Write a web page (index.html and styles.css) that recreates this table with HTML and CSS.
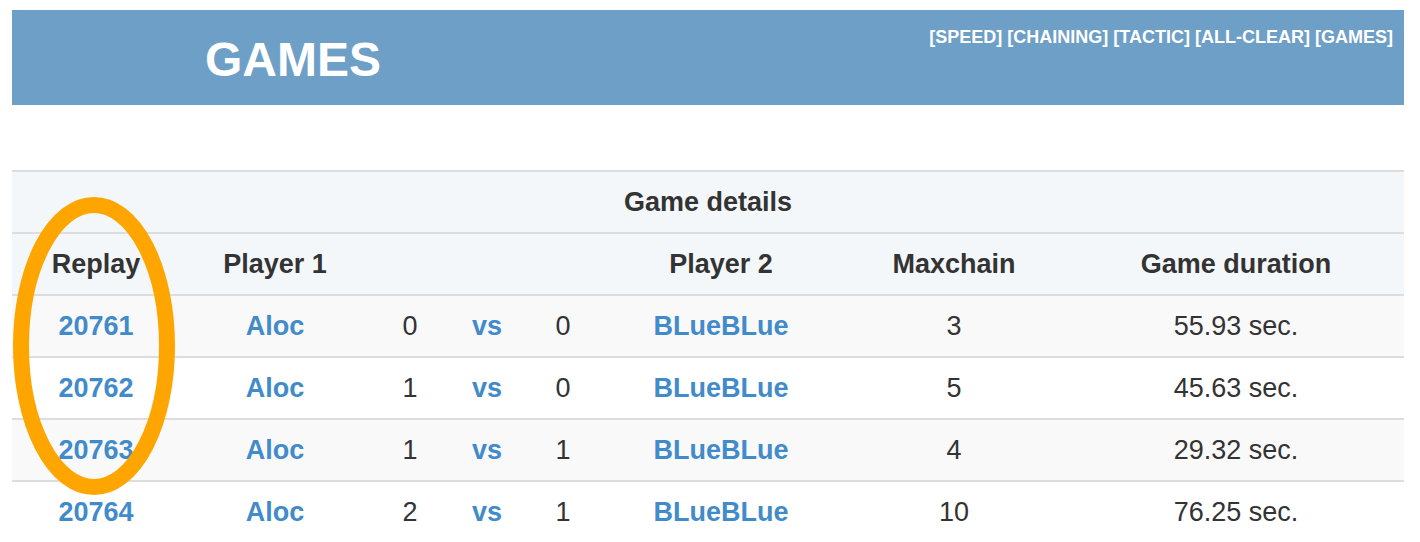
FILE: index.html
```html
<!DOCTYPE html>
<html>
<head>
<meta charset="utf-8">
<title>Games</title>
<link rel="stylesheet" href="styles.css">
</head>
<body>
<div class="page">
  <header class="banner">
    <h1 class="title">GAMES</h1>
    <nav class="nav">
      <a href="#">[SPEED]</a> <a href="#">[CHAINING]</a> <a href="#">[TACTIC]</a> <a href="#">[ALL-CLEAR]</a> <a href="#">[GAMES]</a>
    </nav>
  </header>

  <div class="table-wrap">
    <table class="games">
      <colgroup>
        <col class="c-replay">
        <col class="c-p1">
        <col class="c-s1">
        <col class="c-vs">
        <col class="c-s2">
        <col class="c-p2">
        <col class="c-max">
        <col class="c-dur">
      </colgroup>
      <thead>
        <tr><th colspan="8">Game details</th></tr>
        <tr>
          <th>Replay</th>
          <th>Player 1</th>
          <th></th>
          <th></th>
          <th></th>
          <th>Player 2</th>
          <th>Maxchain</th>
          <th>Game duration</th>
        </tr>
      </thead>
      <tbody>
        <tr class="odd">
          <td><a href="#">20761</a></td><td><a href="#">Aloc</a></td><td>0</td><td><a href="#">vs</a></td><td>0</td><td><a href="#">BLueBLue</a></td><td>3</td><td>55.93 sec.</td>
        </tr>
        <tr>
          <td><a href="#">20762</a></td><td><a href="#">Aloc</a></td><td>1</td><td><a href="#">vs</a></td><td>0</td><td><a href="#">BLueBLue</a></td><td>5</td><td>45.63 sec.</td>
        </tr>
        <tr class="odd">
          <td><a href="#">20763</a></td><td><a href="#">Aloc</a></td><td>1</td><td><a href="#">vs</a></td><td>1</td><td><a href="#">BLueBLue</a></td><td>4</td><td>29.32 sec.</td>
        </tr>
        <tr>
          <td><a href="#">20764</a></td><td><a href="#">Aloc</a></td><td>2</td><td><a href="#">vs</a></td><td>1</td><td><a href="#">BLueBLue</a></td><td>10</td><td>76.25 sec.</td>
        </tr>
      </tbody>
    </table>
    <svg class="highlight" width="164" height="300" viewBox="0 0 164 300" aria-hidden="true">
      <ellipse cx="81" cy="149" rx="73" ry="141" fill="none" stroke="#ffa500" stroke-width="16"/>
    </svg>
  </div>
</div>
</body>
</html>
```

FILE: styles.css
```css
html, body {
  margin: 0;
  padding: 0;
  background: #fff;
}

body {
  font-family: "Liberation Sans", Arial, Helvetica, sans-serif;
  color: #333;
}

.page {
  padding: 10px 16px 0 12px;
}

.banner {
  background: #6e9fc7;
  height: 95px;
  display: flex;
  justify-content: space-between;
  align-items: flex-start;
  box-sizing: border-box;
}

.title {
  margin: 0;
  padding: 22px 0 0 193px;
  font-size: 48px;
  line-height: 56px;
  font-weight: bold;
  color: #fff;
}

.nav {
  padding: 16px 11px 0 0;
  font-size: 18px;
  line-height: 22px;
  font-weight: bold;
  white-space: nowrap;
  color: #fff;
}

.nav a {
  color: #fff;
  text-decoration: none;
}

.table-wrap {
  position: relative;
  margin-top: 65px;
}

.games {
  width: 100%;
  table-layout: fixed;
  border-collapse: collapse;
  font-size: 27px;
  line-height: 36px;
}

.c-replay { width: 168px; }
.c-p1 { width: 190px; }
.c-s1 { width: 80px; }
.c-vs { width: 74px; }
.c-s2 { width: 78px; }
.c-p2 { width: 238px; }
.c-max { width: 228px; }
.c-dur { width: 336px; }

.games th,
.games td {
  padding: 12px 0;
  border-top: 2px solid #ddd;
  text-align: center;
  vertical-align: middle;
  white-space: nowrap;
}

.games th {
  font-weight: bold;
  background: #f3f7fa;
  color: #333;
}

.games tr.odd td {
  background: #f9f9f9;
}

.games a {
  color: #428bca;
  font-weight: bold;
  text-decoration: none;
}

.highlight {
  position: absolute;
  left: 1px;
  top: 27px;
}
```
